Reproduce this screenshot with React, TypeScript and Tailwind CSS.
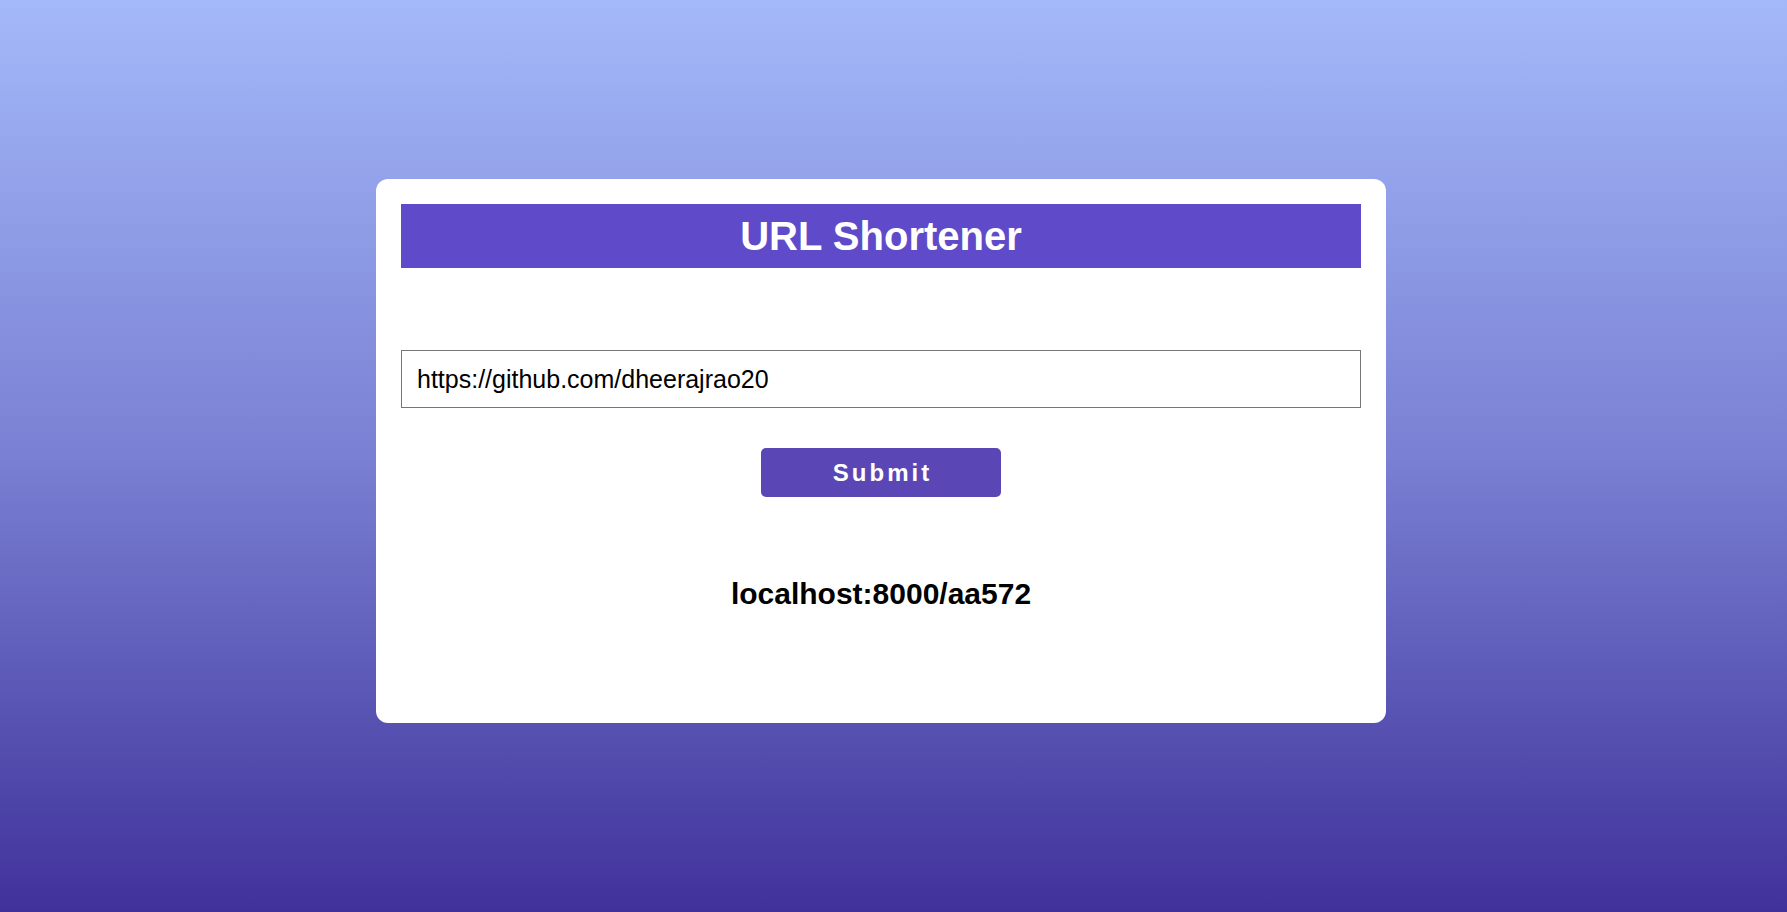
import React from "react";

export default function App() {
  return (
    <div
      className="h-[912px] w-full overflow-hidden flex items-center justify-center pr-[25px] pb-[10px] bg-gradient-to-b from-[#a4b9f9] via-[#7a80d3] to-[#41309a]"
      style={{ fontFamily: '"Liberation Sans", Arial, sans-serif' }}
    >
      <div className="w-[1010px] bg-white rounded-[12px] px-[25px] pt-[25px] pb-[112px] flex flex-col">
        <div className="h-[64px] bg-[#5f4bca] flex items-center justify-center">
          <h1 className="text-white font-bold text-[40px] leading-none">URL Shortener</h1>
        </div>
        <input
          type="text"
          defaultValue="https://github.com/dheerajrao20"
          className="mt-[82px] h-[58px] w-full border border-[#767676] pl-[15px] text-[25px] text-black outline-none"
          style={{ fontFamily: '"Liberation Sans", Arial, sans-serif' }}
        />
        <div className="mt-[40px] flex justify-center">
          <button className="w-[240px] h-[49px] rounded-[5px] border-0 bg-[#5a46b5] text-white font-bold text-[24px] tracking-[3px] pl-[3px]">
            Submit
          </button>
        </div>
        <div className="mt-[80px] text-center text-black font-bold text-[30px] leading-[34px]">
          localhost:8000/aa572
        </div>
      </div>
    </div>
  );
}
